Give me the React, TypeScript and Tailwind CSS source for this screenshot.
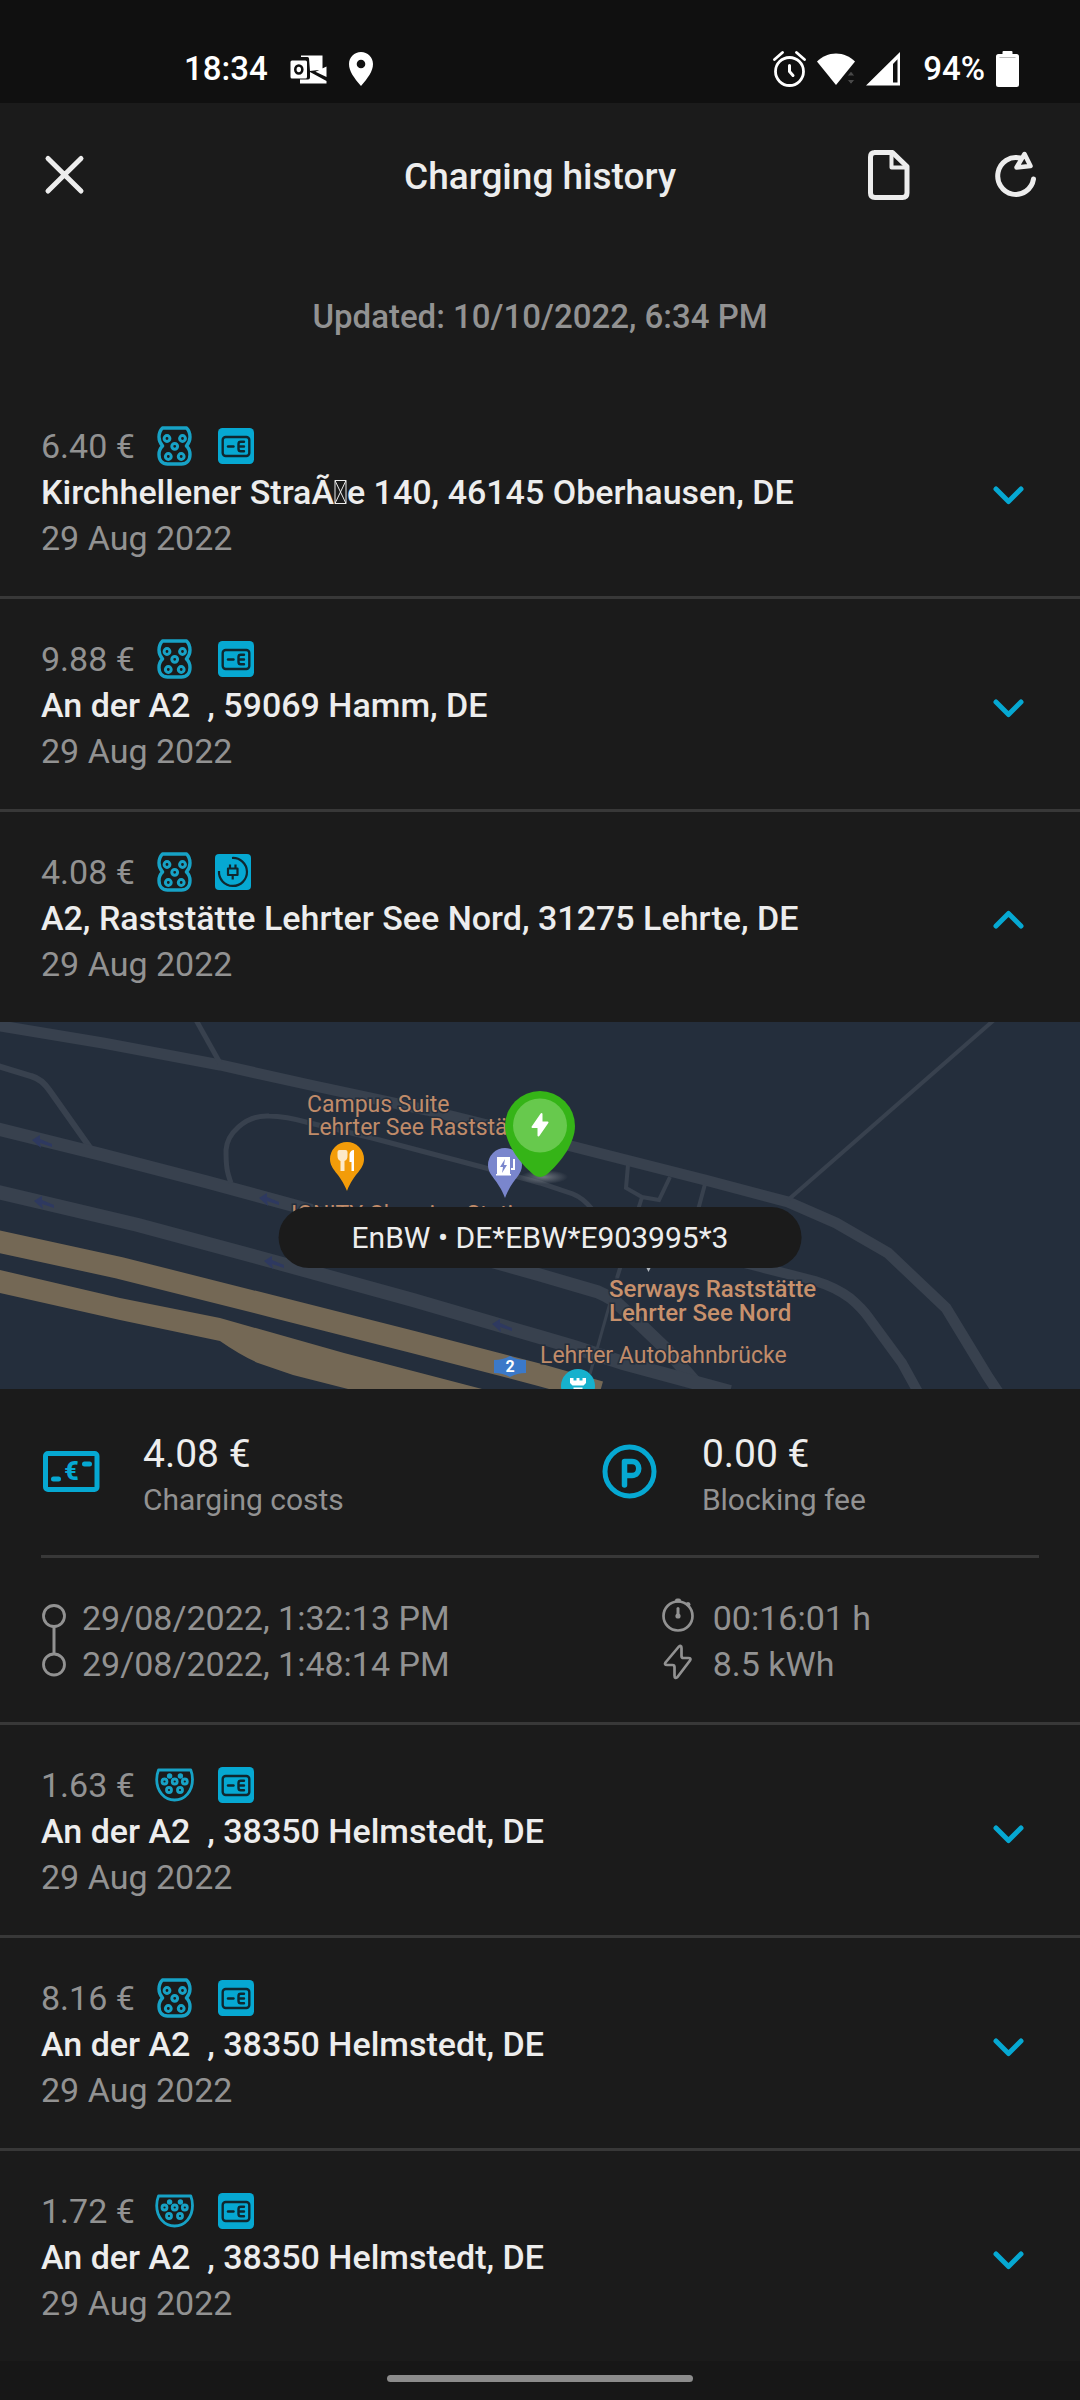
import { useState } from "react";
import type { ReactNode } from "react";

type Plug = "ccs" | "type2";
type Badge = "card" | "plug";

type Session = {
  id: number;
  price: string;
  plug: Plug;
  badge: Badge;
  address: ReactNode;
  date: string;
};

function MissingGlyph() {
  return (
    <svg className="inline-block h-6 w-[13px] align-baseline" viewBox="0 0 13 24" fill="none" stroke="currentColor" aria-hidden="true">
      <path d="M1 .5h11v23H1zM1 .5l11 23M12 .5L1 23.5" />
    </svg>
  );
}

const sessions: Session[] = [
  {
    id: 1,
    price: "6.40 €",
    plug: "ccs",
    badge: "card",
    address: (
      <>
        Kirchhellener StraÃ
        <MissingGlyph />e 140, 46145 Oberhausen, DE
      </>
    ),
    date: "29 Aug 2022",
  },
  { id: 2, price: "9.88 €", plug: "ccs", badge: "card", address: "An der A2  , 59069 Hamm, DE", date: "29 Aug 2022" },
  { id: 3, price: "4.08 €", plug: "ccs", badge: "plug", address: "A2, Raststätte Lehrter See Nord, 31275 Lehrte, DE", date: "29 Aug 2022" },
  { id: 4, price: "1.63 €", plug: "type2", badge: "card", address: "An der A2  , 38350 Helmstedt, DE", date: "29 Aug 2022" },
  { id: 5, price: "8.16 €", plug: "ccs", badge: "card", address: "An der A2  , 38350 Helmstedt, DE", date: "29 Aug 2022" },
  { id: 6, price: "1.72 €", plug: "type2", badge: "card", address: "An der A2  , 38350 Helmstedt, DE", date: "29 Aug 2022" },
];

function PlugIcon({ kind }: { kind: Plug }) {
  if (kind === "ccs") {
    return (
      <svg className="h-10 w-10" viewBox="0 0 40 40" fill="none" stroke="#17a2c6" strokeWidth="3.400" aria-hidden="true">
        <path strokeLinejoin="round" d="M7.500 2h24c2.500 2.500 3.500 5.500 3.500 9 0 4.300-1.500 6.700-3.600 9 2.200 2 3.600 4.800 3.600 8.500 0 6-3.500 9.500-8.500 9.500h-14c-5 0-8.500-3.500-8.500-9.500 0-3.700 1.400-6.500 3.600-8.500C5.500 17.700 4 15.300 4 11c0-3.500 1-6.500 3.500-9z" />
        <g strokeWidth="3">
          <circle cx="12" cy="12.500" r="2.900" />
          <circle cx="27.500" cy="12.500" r="2.900" />
          <circle cx="19.700" cy="20.300" r="2.900" />
          <circle cx="13.300" cy="30.500" r="2.900" />
          <circle cx="26.200" cy="30.500" r="2.900" />
        </g>
      </svg>
    );
  }
  return (
    <svg className="h-10 w-10" viewBox="1 0 40 40" fill="none" stroke="#17a2c6" strokeWidth="2.800" aria-hidden="true">
      <path strokeLinejoin="round" d="M4.500 5h32.300c1.200 3 1.700 6 1.700 9.500 0 11.500-7.500 20.500-17.900 20.500S2.700 26 2.700 14.500c0-3.500.6-6.500 1.800-9.500z" />
      <circle cx="15.600" cy="11" r="2.700" fill="#17a2c6" stroke="none" />
      <circle cx="26.400" cy="11" r="2.700" fill="#17a2c6" stroke="none" />
      <circle cx="10.500" cy="16.500" r="2.500" />
      <circle cx="20.700" cy="16.500" r="2.500" />
      <circle cx="30.800" cy="16.500" r="2.500" />
      <circle cx="15" cy="25" r="2.500" />
      <circle cx="26" cy="25" r="2.500" />
    </svg>
  );
}

function BadgeIcon({ kind }: { kind: Badge }) {
  if (kind === "card") {
    return (
      <svg className="ml-[3px] h-9 w-9" viewBox="0 0 36 36" fill="none" stroke="#10272f" strokeWidth="2.400" aria-hidden="true">
        <rect width="36" height="36" rx="4.500" fill="#06a8d2" stroke="none" />
        <rect x="4.700" y="9" width="26.600" height="19" rx="3" />
        <path strokeLinecap="round" d="M10 18.500h5.500" />
        <path strokeLinecap="round" strokeLinejoin="round" d="M26 13.800h-3.200c-1.600 0-2.300.9-2.300 2.200v5c0 1.400.7 2.300 2.300 2.300H26M20.700 18.500H26" />
      </svg>
    );
  }
  return (
    <svg className="h-9 w-9" viewBox="0 0 36 36" fill="none" stroke="#10272f" strokeWidth="2.200" aria-hidden="true">
      <rect width="36" height="36" rx="4" fill="#06a8d2" stroke="none" />
      <path d="M17 4A14 14 0 1 1 4 17" />
      <path strokeLinejoin="round" d="M15 10.500v4M20.500 10.500v4M13 14.500h9.500v6.500H13zM17.700 21v4.500" />
    </svg>
  );
}

function Chevron({ open }: { open: boolean }) {
  return (
    <svg className="h-12 w-12 shrink-0" viewBox="0 0 48 48" fill="none" stroke="#06a8d2" strokeWidth="5" strokeLinecap="round" strokeLinejoin="round" aria-hidden="true">
      {open ? <path d="M12 32L24.500 19.500L37 32" /> : <path d="M12 21L24.500 33.500L37 21" />}
    </svg>
  );
}

function StatusBar() {
  return (
    <div className="flex h-[103px] items-end justify-between bg-[#101010] pr-[61px] pb-[13px] pl-[184px] text-[33px] leading-[42px] font-medium text-white">
      <div className="flex items-center gap-[22px]">
        <span>18:34</span>
        <div className="flex items-center gap-[22px]">
          <svg className="h-[30px] w-[37px]" viewBox="0 0 37 30" aria-label="Mail">
            <path fill="#fff" d="M11 1.500h21.500v14L20 17l-1-12.500q0-1.500-1.500-1.500H11zM36.500 12.500v10.500L25.500 17.700zM10 25.500h8q2 0 2-2V18l16.500 9v2.500H10z" />
            <rect x=".5" y="6.500" width="16.500" height="18" rx="1.500" fill="#fff" />
            <ellipse cx="8.800" cy="15.500" rx="3.500" ry="4" fill="none" stroke="#101010" strokeWidth="2.600" />
          </svg>
          <svg className="h-[34px] w-6" viewBox="0 0 24 34" aria-label="Location">
            <path fill="#fff" fillRule="evenodd" d="M12 0C5.400 0 0 5.400 0 12c0 7 5 14 12 22 7-8 12-15 12-22C24 5.400 18.600 0 12 0zm0 7.700a4.300 4.300 0 1 1 0 8.600 4.300 4.300 0 0 1 0-8.600z" />
          </svg>
        </div>
      </div>
      <div className="flex items-center gap-[11px]">
        <svg className="h-9 w-[33px]" viewBox="0 0 33 36" fill="none" stroke="#fff" strokeWidth="2.800" strokeLinecap="round" aria-label="Alarm">
          <circle cx="16.500" cy="20.500" r="14" />
          <path d="M1.500 8.500L9.500 1.500M31.500 8.500L23.500 1.500" />
          <path strokeWidth="3" d="M16.500 14.500v6l3.500 4" />
        </svg>
        <svg className="h-9 w-[38px]" viewBox="0 0 38 36" aria-label="Wi-Fi">
          <path fill="#fff" d="M19 34L0 10.500C5 5.500 11.500 2.500 19 2.500s14 3 19 8z" />
          <path fill="#484848" stroke="#101010" d="M34 20l4 5h-8zM34 33.500l-4-5h8z" />
        </svg>
        <svg className="h-9 w-[34px]" viewBox="0 0 34 36" aria-label="Mobile signal">
          <path fill="#fff" fillRule="evenodd" d="M34 1v33.500H0zM27 13v18.500h4.500V8.300z" />
        </svg>
        <span className="ml-[12px]">94%</span>
        <svg className="h-9 w-[23px]" viewBox="0 0 23 36" aria-label="Battery">
          <path fill="#fff" d="M7.500 0h8q1 0 1 1v2h4q2.500 0 2.500 2.500V33.500q0 2.500-2.500 2.500h-18Q0 36 0 33.500V5.500Q0 3 2.500 3h4V1q0-1 1-1z" />
          <path stroke="#bbb" d="M3.500 6.500h16" />
        </svg>
      </div>
    </div>
  );
}

function Header() {
  return (
    <header className="grid h-36 grid-cols-[1fr_auto_1fr] items-center px-10">
      <button type="button" aria-label="Close" className="w-12">
        <svg className="h-12 w-12" viewBox="0 0 48 48" stroke="#ededed" strokeWidth="5" strokeLinecap="round">
          <path d="M8 7.500L41 40M41 7.500L8 40" />
        </svg>
      </button>
      <h1 className="pt-[3px] text-[37px] leading-[46px] font-medium">Charging history</h1>
      <div className="flex justify-end gap-[76px]">
        <button type="button" aria-label="Export">
          <svg className="h-[54px] w-12" viewBox="3 0 48 54" fill="none" stroke="#ededed" strokeWidth="5" strokeLinejoin="round">
            <path d="M9 4.500h18.500L42 18.500V45q0 4.500-4.500 4.500H10q-4.500 0-4.500-4.500V9q0-4.500 4.500-4.500" />
            <path strokeWidth="4" d="M26.500 5v14.500H42" />
          </svg>
        </button>
        <button type="button" aria-label="Refresh">
          <svg className="h-[54px] w-12" viewBox="3 0 48 54" fill="none" stroke="#ededed" strokeWidth="5" strokeLinecap="round" strokeLinejoin="round">
            <path d="M31 10A18 18.500 0 1 0 44.500 31" />
            <path strokeWidth="4.500" d="M35.500 6L41.500 18L27.500 19.500z" />
          </svg>
        </button>
      </div>
    </header>
  );
}

function Arrow({ x, y }: { x: number; y: number }) {
  return <path transform={`translate(${x} ${y})`} fill="#2e3960" d="M-11-2l8-5v4l12 5v3L-3 1l1 5z" />;
}

function StationMap() {
  return (
    <div className="relative h-[367px] overflow-hidden bg-[#242e3c]">
      <svg className="h-full w-full" viewBox="0 0 1080 367" preserveAspectRatio="xMidYMid slice" fontFamily="Roboto, sans-serif" role="img" aria-label="Map of Lehrter See Nord">
        <defs>
          <radialGradient id="pin-shadow">
            <stop offset="0" stopColor="#8d9299" stopOpacity=".7" />
            <stop offset="1" stopColor="#8d9299" stopOpacity="0" />
          </radialGradient>
        </defs>
        <g fill="none" stroke="#38414e">
          <path strokeWidth="11" d="M-5 3L103 21L220 43L310 63L427 88L567 123L626 138L705 158L788 180L836 201L888 231L946 286L988 355L998 370" />
          <path strokeWidth="5" d="M196 -2L220 41" />
          <path strokeWidth="4" d="M994 -2L788 178" />
          <path strokeWidth="6" d="M-2 44L31 54Q42 57 50 69L91 127" />
          <path strokeWidth="13" d="M-2 107L103 133L207 160L310 188L430 222L540 253L598 270Q612 276 619 283L643 305L667 328L695 360" />
          <path strokeWidth="14" d="M-2 170L138 203L275 240L413 278L540 315L574 325L623 341L730 370" />
          <path strokeWidth="5" d="M231 161C227 150 226 145 226 128C227 112 245 93 269 94Q285 94 310 101L372 116L482 145L540 161L573 172Q583 176 592 187" />
          <path strokeWidth="10" d="M700 230L760 245L815 259Q835 265 850 276Q862 286 869 296L902 341L918 370" />
          <path strokeWidth="4" d="M628 143L626 166L642 175L659 178L670 155M642 175L617 256M705 162L698 188" />
          <path strokeWidth="3" d="M617 256L590 352" />
        </g>
        <path fill="none" stroke="#746855" strokeWidth="22" d="M-4 219L120 246L275 285L413 320L540 353L600 370" />
        <path fill="#746855" d="M0 248L120 276L220 296L344 331L482 367H348L293 353L258 341Q240 333 220 319L120 298L0 271z" />
        <Arrow x={43} y={120} />
        <Arrow x={45} y={181} />
        <Arrow x={270} y={178} />
        <Arrow x={275} y={241} />
        <Arrow x={503} y={304} />
        <g fill="#c08b69" stroke="#242e3c" strokeWidth="3" paintOrder="stroke" fontSize="23">
          <text x="307" y="90">Campus Suite</text>
          <text x="307" y="113">Lehrter See Raststätte</text>
          <text x="291" y="200">IONITY Charging Station</text>
          <text x="540" y="341">Lehrter Autobahnbrücke</text>
          <g fill="#c8916c" fontWeight="500" fontSize="24">
            <text x="609" y="275">Serways Raststätte</text>
            <text x="609" y="299">Lehrter See Nord</text>
          </g>
        </g>
        <path fill="#b0b6bd" d="M646 245h5l-2.500 5z" />
        <path fill="#f39c09" d="M347 120a17 17 0 0 1 17 17c0 11-10 14-17 32c-7-18-17-21-17-32a17 17 0 0 1 17-17z" />
        <path fill="#fde9c8" d="M337.500 130q0-2 2-2h6q2 0 2 2v4q0 4-3 5v10h-4v-10q-3-1-3-5z" />
        <path fill="#fff" d="M349.500 132q1-4 4.500-4v21h-2.500v-9h-2z" />
        <path fill="#7a86cd" d="M505 126a17 17 0 0 1 17 17c0 11-10 14-17 33c-7-19-17-22-17-33a17 17 0 0 1 17-17z" />
        <path fill="#fff" d="M497 135h13v17h1v1.500h-15V152h1z" />
        <path fill="none" stroke="#fff" strokeWidth="2" d="M511 147h3v-10" />
        <path fill="#7a86cd" d="M505 137l-5 8h3l-1 6l5-8h-3z" />
        <ellipse cx="544" cy="155" rx="24" ry="7" fill="url(#pin-shadow)" />
        <path fill="#35b417" d="M540 69a35 35 0 0 1 35 35c0 16-13 36-29 49q-6 4-12 0c-16-13-29-33-29-49a35 35 0 0 1 35-35z" />
        <circle cx="540" cy="103.500" r="27" fill="#67c94d" />
        <path fill="#fff" stroke="#fff" strokeWidth="2" strokeLinejoin="round" d="M541.500 92v8.500h6l-9 13v-8.500h-6z" />
        <path fill="#3b79c9" d="M494 338q9 0 16-4q7 4 16 4v13q-9 0-16 4q-7-4-16-4z" />
        <text x="510" y="350" textAnchor="middle" fontSize="16" fontWeight="700" fill="#fff">
          2
        </text>
        <circle cx="578" cy="364" r="17" fill="#16b1cd" />
        <path fill="#fff" d="M570 356h3.500v2.500h3V356h3v2.500h3V356h3.500v5l-2.500 2.500h-11l-2.500-2.500zM573.500 365.500h9V372h-9z" />
      </svg>
      <p className="absolute top-[185px] left-1/2 -translate-x-1/2 rounded-full bg-[#1b1b1b] px-[73px] text-[30px] leading-[61px] whitespace-nowrap">
        EnBW • DE*EBW*E903995*3
      </p>
    </div>
  );
}

function Details() {
  return (
    <>
      <StationMap />
      <div className="border-b-[3px] border-[#383838] px-[41px]">
        <dl className="flex border-b-[3px] border-[#383838] py-[37px]">
          <div className="flex w-[56%] items-center gap-[40px]">
            <svg className="h-16 w-[62px]" viewBox="0 1 62 64" fill="none" stroke="#06a8d2" strokeWidth="5" aria-hidden="true">
              <rect x="4.500" y="14.500" width="51.500" height="36" rx="2.500" />
              <path strokeLinecap="round" d="M12.500 40h5M43.500 25h5" />
              <text x="30.500" y="41" textAnchor="middle" fontSize="25" fontWeight="900" fill="#06a8d2" stroke="none">
                €
              </text>
            </svg>
            <div className="flex flex-col">
              <dd className="text-[39px] leading-[56px]">4.08 €</dd>
              <dt className="text-[30px] leading-[36px] text-[#929292]">Charging costs</dt>
            </div>
          </div>
          <div className="flex items-center gap-[40px]">
            <svg className="h-16 w-[62px]" viewBox="0 1 62 64" fill="none" stroke="#06a8d2" strokeWidth="5" strokeLinecap="round" strokeLinejoin="round" aria-hidden="true">
              <circle cx="29.500" cy="32.500" r="24.500" />
              <path strokeWidth="5.500" d="M24.500 46V22.500h7.500c9 0 9 14 0 14h-7.500" />
            </svg>
            <div className="flex flex-col">
              <dd className="text-[39px] leading-[56px]">0.00 €</dd>
              <dt className="text-[30px] leading-[36px] text-[#929292]">Blocking fee</dt>
            </div>
          </div>
        </dl>
        <div className="flex pt-[37px] pb-[35px] text-[34px] leading-[46px] text-[#929292]">
          <div className="flex w-[62%] items-center gap-[14px]">
            <svg className="h-[92px] w-[27px]" viewBox="0 0 27 92" fill="none" stroke="#929292" strokeWidth="2.800" aria-hidden="true">
              <circle cx="13" cy="21" r="10.500" />
              <circle cx="13" cy="69.500" r="10.500" />
              <path strokeWidth="3" d="M13 31.500V59" />
            </svg>
            <div>
              <p>29/08/2022, 1:32:13 PM</p>
              <p>29/08/2022, 1:48:14 PM</p>
            </div>
          </div>
          <div>
            <p className="flex items-center gap-[17px]">
              <svg className="h-[46px] w-9" viewBox="0 0 36 46" fill="none" stroke="#929292" strokeWidth="2.700" strokeLinecap="round" aria-hidden="true">
                <circle cx="18" cy="21" r="14.500" />
                <path strokeWidth="3" d="M18 13.500v7.500" />
                <circle cx="18" cy="21" r="2.600" fill="#929292" stroke="none" />
                <path strokeWidth="4" d="M17 5.500h2M28 9l.5.500" />
              </svg>
              00:16:01 h
            </p>
            <p className="flex items-center gap-[17px]">
              <svg className="h-[46px] w-9" viewBox="0 0 36 46" fill="none" stroke="#929292" strokeWidth="2.700" strokeLinejoin="round" aria-hidden="true">
                <path d="M18.500 6Q21.500 3.500 21.500 7v8q0 2 2 2h5q3 0 1.500 2.500L17.500 36q-3 2.500-3-1.500V26q0-2-2-2H7q-3 0-1.500-2.500z" />
              </svg>
              8.5 kWh
            </p>
          </div>
        </div>
      </div>
    </>
  );
}

export default function App() {
  const [openId, setOpenId] = useState<number | null>(3);
  return (
    <div className="min-h-screen bg-[#1b1b1b] font-[Roboto,sans-serif] text-[#ededed]">
      <StatusBar />
      <Header />
      <main>
        <p className="pt-[47px] pb-[46px] text-center text-[33px] leading-[46px] font-medium text-[#929292]">Updated: 10/10/2022, 6:34 PM</p>
        <ul>
          {sessions.map((s, i) => {
            const open = s.id === openId;
            const last = i === sessions.length - 1;
            return (
              <li key={s.id} className={open || last ? "" : "border-b-[3px] border-[#383838]"}>
                <button
                  type="button"
                  aria-expanded={open}
                  onClick={() => setOpenId(open ? null : s.id)}
                  className="flex w-full items-center justify-between pt-[37px] pr-12 pb-[35px] pl-[41px] text-left text-[34px] leading-[46px]"
                >
                  <span className="block">
                    <span className="flex h-[46px] items-center gap-5 text-[#929292]">
                      {s.price}
                      <PlugIcon kind={s.plug} />
                      <BadgeIcon kind={s.badge} />
                    </span>
                    <span className="block h-[46px] font-medium whitespace-pre">{s.address}</span>
                    <span className="block text-[#929292]">{s.date}</span>
                  </span>
                  <Chevron open={open} />
                </button>
                {open && <Details />}
              </li>
            );
          })}
        </ul>
      </main>
      <div className="flex h-[39px] justify-center bg-[#171717] pt-[14px]">
        <div className="h-[7px] w-[306px] rounded-full bg-[#8c8c8c]" />
      </div>
    </div>
  );
}
